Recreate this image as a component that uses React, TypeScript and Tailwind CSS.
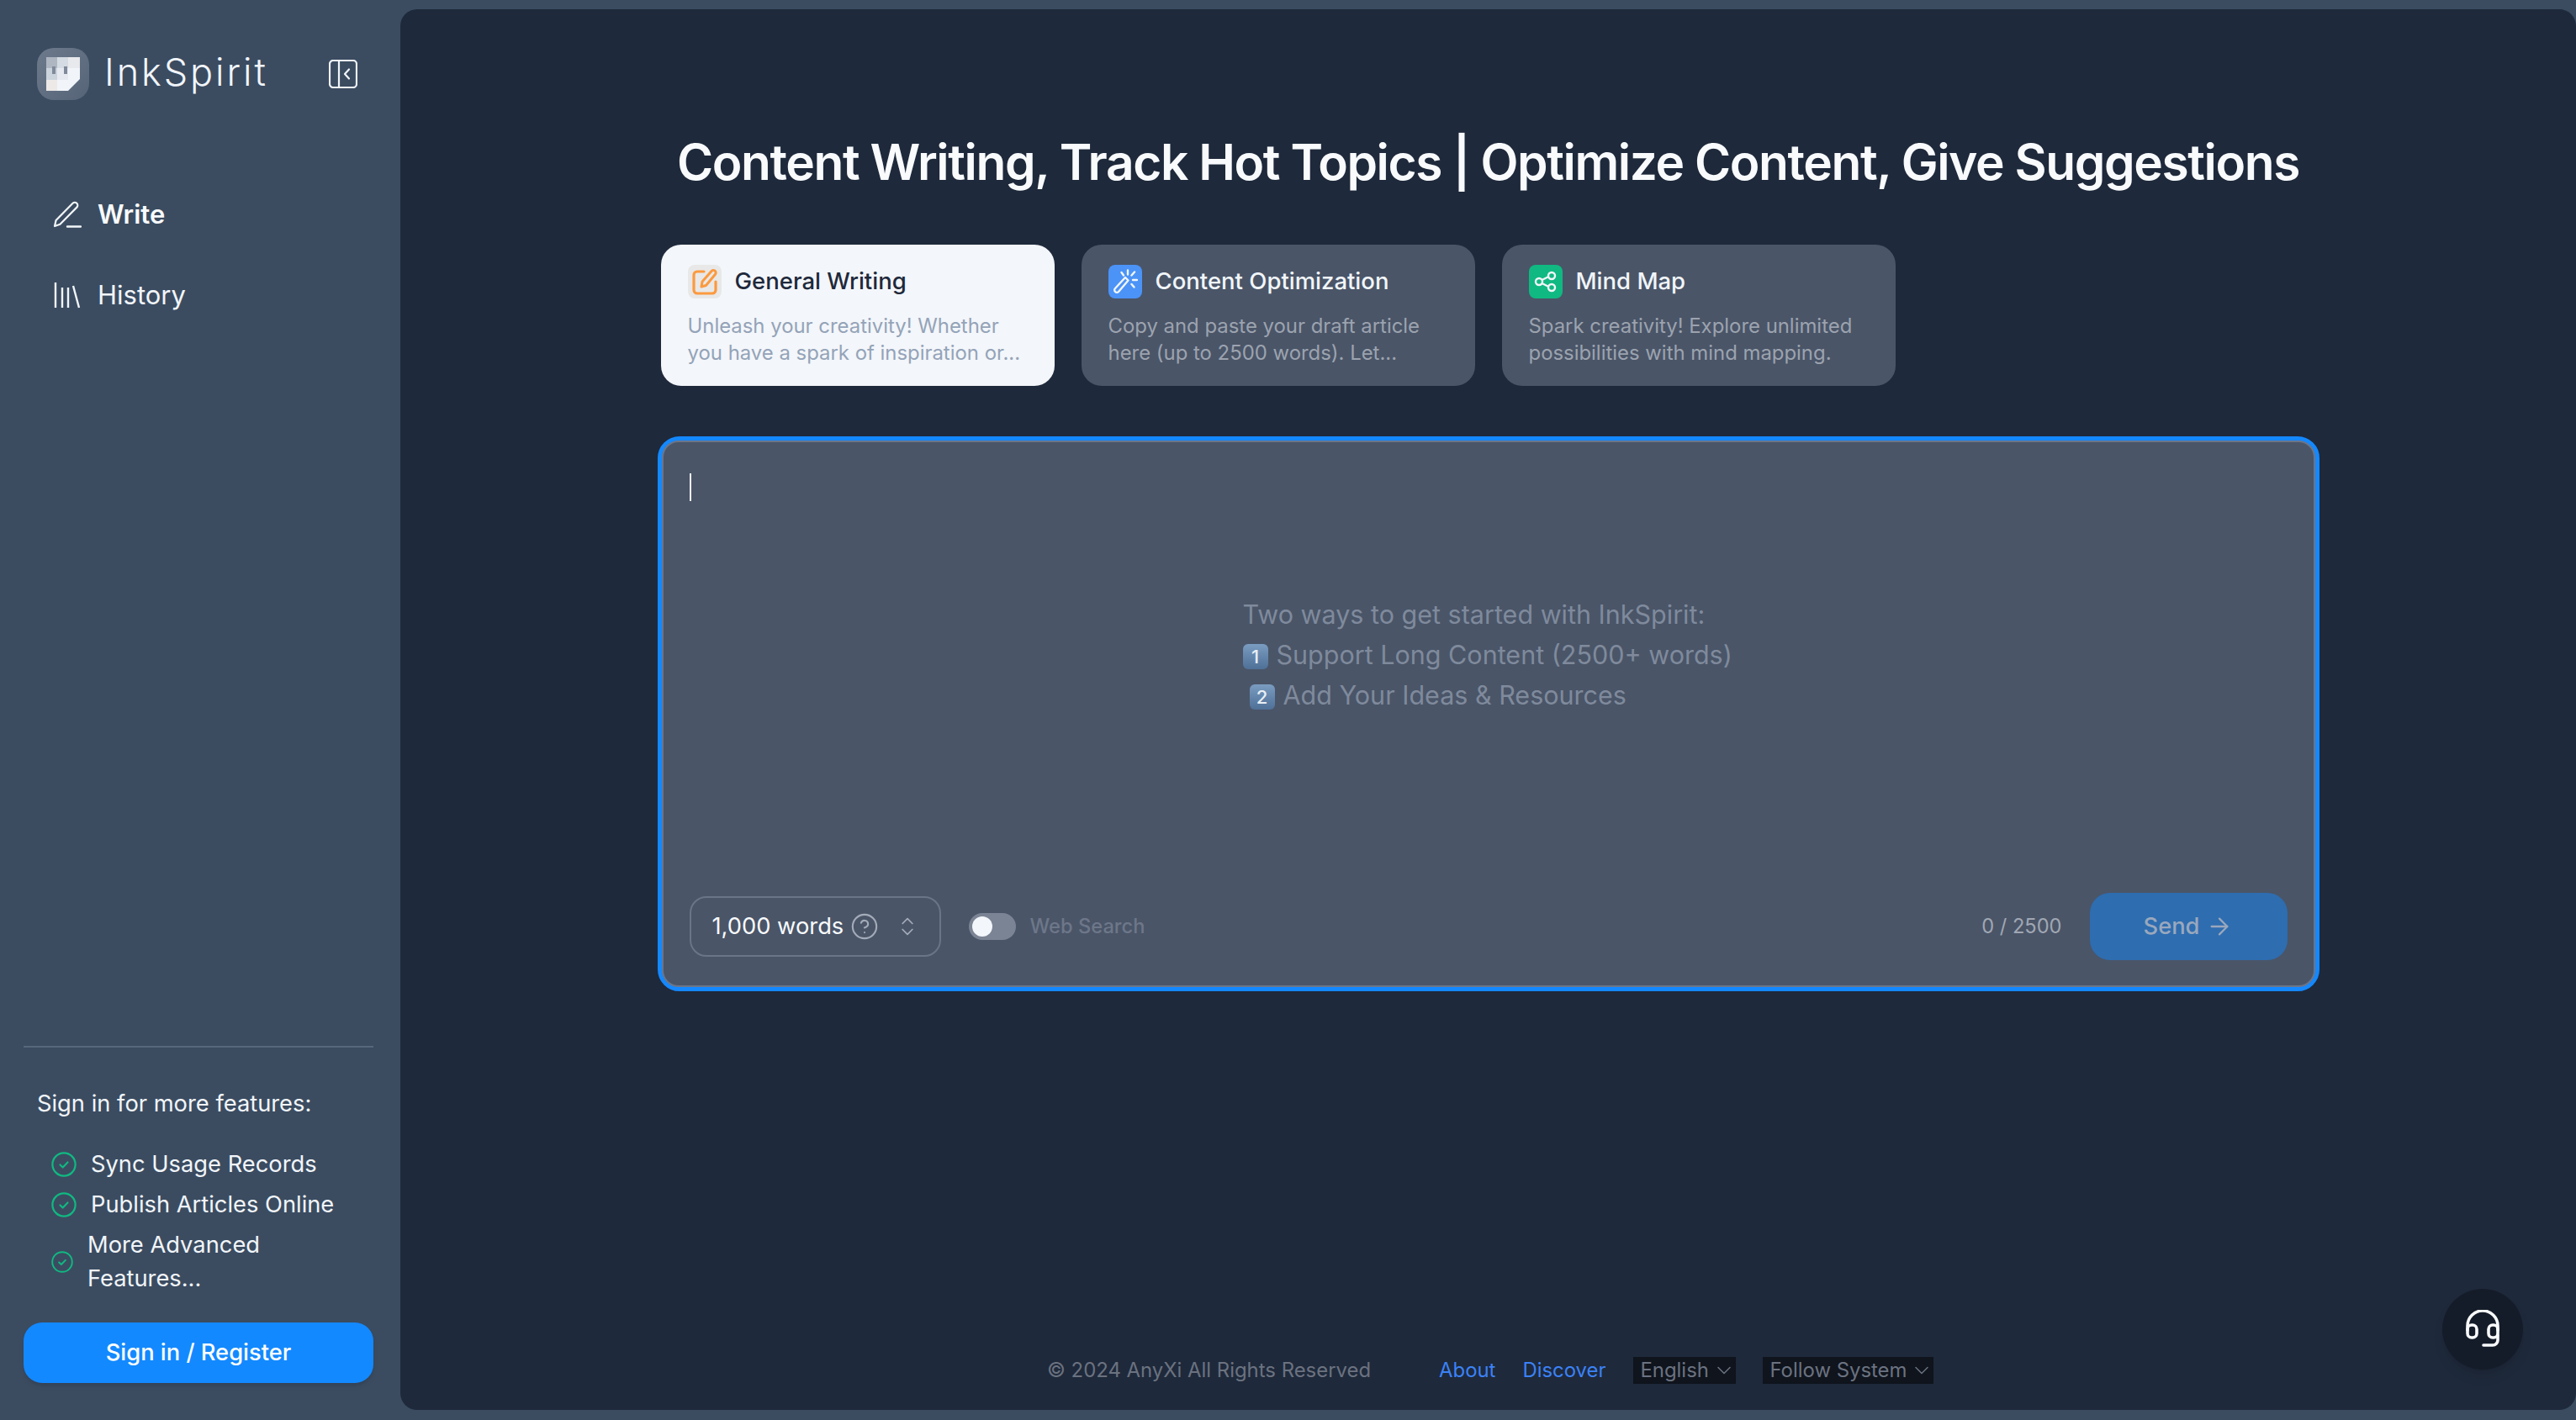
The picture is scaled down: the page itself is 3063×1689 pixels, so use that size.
import { ChevronDown, ChevronsUpDown, ArrowRight, CircleHelp } from "lucide-react";

const Logo = () => (
  <div className="w-[62px] h-[62px] rounded-[20px] bg-linear-to-br from-[#6d7a8c] to-[#566478] flex items-center justify-center shrink-0">
    <svg width="40" height="40" viewBox="0 0 40 40">
      <path d="M0 2 a2 2 0 0 1 2-2 H38 a2 2 0 0 1 2 2 V26 L26 40 H2 a2 2 0 0 1-2-2 Z" fill="#f1f5f9" />
      <rect x="0" y="0" width="13" height="13" fill="#aeb6c2" />
      <rect x="13" y="0" width="13" height="13" fill="#d5dbe2" />
      <rect x="26" y="0" width="14" height="13" fill="#e8e9ec" />
      <rect x="0" y="13" width="13" height="14" fill="#cbd3dd" />
      <rect x="13" y="13" width="13" height="14" fill="#e6eaf0" />
      <rect x="0" y="27" width="13" height="13" fill="#ece9e7" />
      <rect x="7" y="11" width="4" height="9" fill="#7f8a9a" />
      <rect x="21" y="11" width="4" height="9" fill="#7f8a9a" />
    </svg>
  </div>
);

const CheckItem = ({ label, small }: { label: string; small?: boolean }) => (
  <div className="flex items-center gap-[17px]">
    <svg width={small ? 26 : 30} height={small ? 26 : 30} viewBox="0 0 30 30" fill="none" className="shrink-0">
      <circle cx="15" cy="15" r="13.6" stroke="#10b981" strokeWidth="2.2" />
      <path d="M10.5 15.5l3.2 3 5.8-6" stroke="#10b981" strokeWidth="2.2" strokeLinecap="round" strokeLinejoin="round" />
    </svg>
    <span className="text-[27.3px] leading-[40px] text-[#f1f5f9]">{label}</span>
  </div>
);

const TaskCard = ({
  active,
  title,
  lines,
  icon,
}: {
  active?: boolean;
  title: string;
  lines: string[];
  icon: React.ReactNode;
}) => (
  <div className={`w-[468px] h-[168px] rounded-[24px] pl-[32px] pt-[24px] ${active ? "bg-[#f3f6fa]" : "bg-[#4a5568]"}`}>
    <div className="flex items-center gap-[16px] h-[40px]">
      {icon}
      <span className={`text-[27.5px] font-medium ${active ? "text-[#1e293b]" : "text-[#f1f5f9]"}`}>{title}</span>
    </div>
    <div className={`mt-[17px] text-[23.9px] leading-[32px] ${active ? "text-[#94a3b8]" : "text-[#9ca3af]"}`}>
      {lines.map((l) => (
        <div key={l}>{l}</div>
      ))}
    </div>
  </div>
);

const Keycap = ({ n }: { n: string }) => (
  <span className="inline-flex items-center justify-center w-[30px] h-[30px] rounded-[6px] bg-linear-to-b from-[#7a9cc0] to-[#4f7097] text-[#e8eef5] text-[22px] font-medium leading-none align-[1px] mr-[10px]">
    {n}
  </span>
);

const App = () => {
  return (
    <div className="flex w-full h-screen overflow-hidden bg-[#3b4c61] font-[Inter,sans-serif]">
      <aside className="w-[476px] shrink-0 flex flex-col pl-[28px] pr-[32px] pb-[44px]">
        <div className="flex items-center pl-[16px] pt-[57px]">
          <Logo />
          <span className="ml-[18px] -mt-[4px] text-[45px] leading-[62px] font-light tracking-[2.9px] text-[#f1f5f9]">InkSpirit</span>
          <svg width="34" height="34" viewBox="0 0 34 34" fill="none" className="ml-[72px]">
            <rect x="1" y="1" width="32" height="32" rx="4" stroke="#f1f5f9" strokeWidth="2.2" />
            <path d="M12 1v32" stroke="#f1f5f9" strokeWidth="2.2" />
            <path d="M24 11.5l-5 5.5 5 5.5" stroke="#f1f5f9" strokeWidth="2.2" strokeLinecap="round" strokeLinejoin="round" />
          </svg>
        </div>

        <nav className="mt-[112px] pl-[35px] flex flex-col gap-[48px]">
          <div className="flex items-center gap-[19px] h-[48px]">
            <svg width="34" height="32" viewBox="0 0 34 32" fill="none" className="shrink-0">
              <path d="M2 30l1.6-7L23.5 2.8a3.4 3.4 0 0 1 4.8 0 3.4 3.4 0 0 1 0 4.8L8.4 27.8z" stroke="#f1f5f9" strokeWidth="2.2" strokeLinejoin="round" />
              <path d="M17 30.5h16" stroke="#f1f5f9" strokeWidth="2.4" strokeLinecap="round" />
            </svg>
            <span className="text-[31px] font-semibold text-[#f8fafc]">Write</span>
          </div>
          <div className="flex items-center gap-[19px] h-[48px]">
            <svg width="34" height="32" viewBox="0 0 34 32" fill="none" className="shrink-0">
              <path d="M3 1v30M11 7v24M18 7v24M24 5l7 26" stroke="#f1f5f9" strokeWidth="2.4" />
            </svg>
            <span className="text-[31px] text-[#f1f5f9]">History</span>
          </div>
        </nav>

        <div className="mt-auto border-t-2 border-[#586779] pt-[47px]">
          <div className="pl-[16px] text-[27.3px] leading-[40px] text-[#f1f5f9]">Sign in for more features:</div>
          <div className="mt-[32px] pl-[33px] flex flex-col gap-[8px]">
            <CheckItem label="Sync Usage Records" />
            <CheckItem label="Publish Articles Online" />
            <CheckItem label="More Advanced Features..." small />
          </div>
          <button className="mt-[32px] w-full h-[72px] rounded-[22px] bg-[#1389ff] text-white text-[27.3px] font-medium shadow-md">
            Sign in / Register
          </button>
        </div>
      </aside>

      <main className="relative flex-1 mt-[11px] mb-[12px] rounded-[20px] bg-[#1e293b] flex flex-col items-center">
        <h1 className="mt-[146px] text-[58.6px] leading-[72px] font-semibold tracking-[-1.4px] text-[#f8fafc] whitespace-nowrap">
          Content Writing, Track Hot Topics | Optimize Content, Give Suggestions
        </h1>

        <div className="w-[1976px] mt-[62px] pl-[4px]">
          <div className="flex gap-[32px]">
            <TaskCard
              active
              title="General Writing"
              lines={["Unleash your creativity! Whether", "you have a spark of inspiration or..."]}
              icon={
                <span className="w-[40px] h-[40px] rounded-[8px] bg-[#e8e8e8] flex items-center justify-center">
                  <svg width="30" height="32" viewBox="0 0 30 32" fill="none">
                    <path d="M14 4H6a4 4 0 0 0-4 4v18a4 4 0 0 0 4 4h18a4 4 0 0 0 4-4V16" stroke="#fb9a3f" strokeWidth="3.2" strokeLinecap="round" />
                    <path d="M11 22l1-6L23 3.500a2.800 2.800 0 0 1 4.500 3.700L16.500 20.500z" stroke="#fb9a3f" strokeWidth="3" strokeLinejoin="round" />
                  </svg>
                </span>
              }
            />
            <TaskCard
              title="Content Optimization"
              lines={["Copy and paste your draft article", "here (up to 2500 words). Let..."]}
              icon={
                <span className="w-[40px] h-[40px] rounded-[8px] bg-[#4b93f7] flex items-center justify-center">
                  <svg width="30" height="30" viewBox="0 0 30 30" fill="none">
                    <path d="M3 27a2.800 2.800 0 0 1 0-4L15 10l3.500 3.500L7 27a2.800 2.800 0 0 1-4 0z" stroke="#f1f5f9" strokeWidth="2.400" strokeLinejoin="round" />
                    <path d="M18 1.500v5M10.500 4l2.500 3.500M26 3.500L22.500 7.500M24 13h5M22.500 18l3 3.500" stroke="#f1f5f9" strokeWidth="2.400" strokeLinecap="round" />
                  </svg>
                </span>
              }
            />
            <TaskCard
              title="Mind Map"
              lines={["Spark creativity! Explore unlimited", "possibilities with mind mapping."]}
              icon={
                <span className="w-[40px] h-[40px] rounded-[8px] bg-[#10b981] flex items-center justify-center">
                  <svg width="28" height="28" viewBox="0 0 28 28" fill="none" stroke="#f1f5f9" strokeWidth="2.400">
                    <circle cx="6" cy="14" r="4" />
                    <circle cx="21" cy="7" r="4" />
                    <circle cx="21" cy="21" r="4" />
                    <path d="M9.500 12l8-4M9.500 16l8 4" />
                  </svg>
                </span>
              }
            />
          </div>

          <div className="mt-[60px] -ml-[4px] h-[660px] rounded-[26px] border-[5px] border-[#1488ff] bg-[#1488ff]">
            <div className="h-full rounded-[20px] border-2 border-[#6b7588] bg-[#4a5568] flex flex-col px-[31px] pb-[30px]">
              <div className="relative flex-1 flex items-center justify-center pb-[32px]">
                <span className="absolute left-0 top-[37px] w-[2px] h-[33px] bg-[#f1f5f9]" />
                <div className="text-[30.5px] leading-[48px] text-[#7f8a9c] w-[584px] mt-[2px] whitespace-nowrap">
                  <div>Two ways to get started with InkSpirit:</div>
                  <div>
                    <Keycap n="1" />
                    Support Long Content (2500+ words)
                  </div>
                  <div className="pl-[8px]">
                    <Keycap n="2" />
                    Add Your Ideas &amp; Resources
                  </div>
                </div>
              </div>
              <div className="flex items-center h-[80px]">
                <div className="w-[299px] h-[72px] rounded-[20px] border-2 border-[#6b7588] flex items-center pl-[25px]">
                  <span className="text-[27.3px] text-[#f8fafc]">1,000 words</span>
                  <CircleHelp size={34} strokeWidth={1.5} className="ml-[8px] text-[#a3abb8]" />
                  <ChevronsUpDown size={28} strokeWidth={1.5} className="ml-[20px] text-[#a3abb8]" />
                </div>
                <div className="ml-[33px] w-[56px] h-[32px] rounded-full bg-[#7b8494] pl-[4px] flex items-center">
                  <span className="w-[24px] h-[24px] rounded-full bg-[#f3f6fa]" />
                </div>
                <span className="ml-[17px] text-[23.7px] font-medium text-[#6d7789]">Web Search</span>
                <span className="ml-auto text-[23.6px] text-[#a0a7b3]">0 / 2500</span>
                <button className="ml-[33px] w-[235px] h-[80px] rounded-[24px] bg-[#2e6db0] flex items-center justify-center gap-[8px] text-[27.3px] font-medium text-[#9aa8bd]">
                  Send
                  <ArrowRight size={32} strokeWidth={1.7} />
                </button>
              </div>
            </div>
          </div>
        </div>

        <footer className="absolute bottom-[31px] left-[769px] flex items-center h-[32px] text-[23.9px] text-[#6b7280] whitespace-nowrap">
          <span>© 2024 AnyXi All Rights Reserved</span>
          <span className="ml-[81px] text-[#3b82f6]">About</span>
          <span className="ml-[32px] text-[#3b82f6]">Discover</span>
          <span className="ml-[33px] w-[122px] h-[32px] bg-[#0f141d] flex items-center pl-[8px]">
            English
            <ChevronDown size={28} strokeWidth={1.3} className="ml-[4px]" />
          </span>
          <span className="ml-[32px] w-[203px] h-[32px] bg-[#0f141d] flex items-center pl-[8px]">
            Follow System
            <ChevronDown size={28} strokeWidth={1.3} className="ml-[4px]" />
          </span>
        </footer>

        <button className="absolute right-[63px] bottom-[48px] w-[96px] h-[96px] rounded-full bg-[#151c29] shadow-lg flex items-center justify-center">
          <svg width="42" height="46" viewBox="0 0 42 46" fill="none" stroke="#f8fafc" strokeWidth="3.600" strokeLinecap="round">
            <path d="M3 24v-5a18 18 0 0 1 36 0v5" />
            <rect x="3" y="18" width="11" height="15" rx="5" />
            <rect x="28" y="18" width="11" height="15" rx="5" />
            <path d="M39 30v6a6 6 0 0 1-6 6H22" />
          </svg>
        </button>
      </main>
    </div>
  );
};

export default App;
